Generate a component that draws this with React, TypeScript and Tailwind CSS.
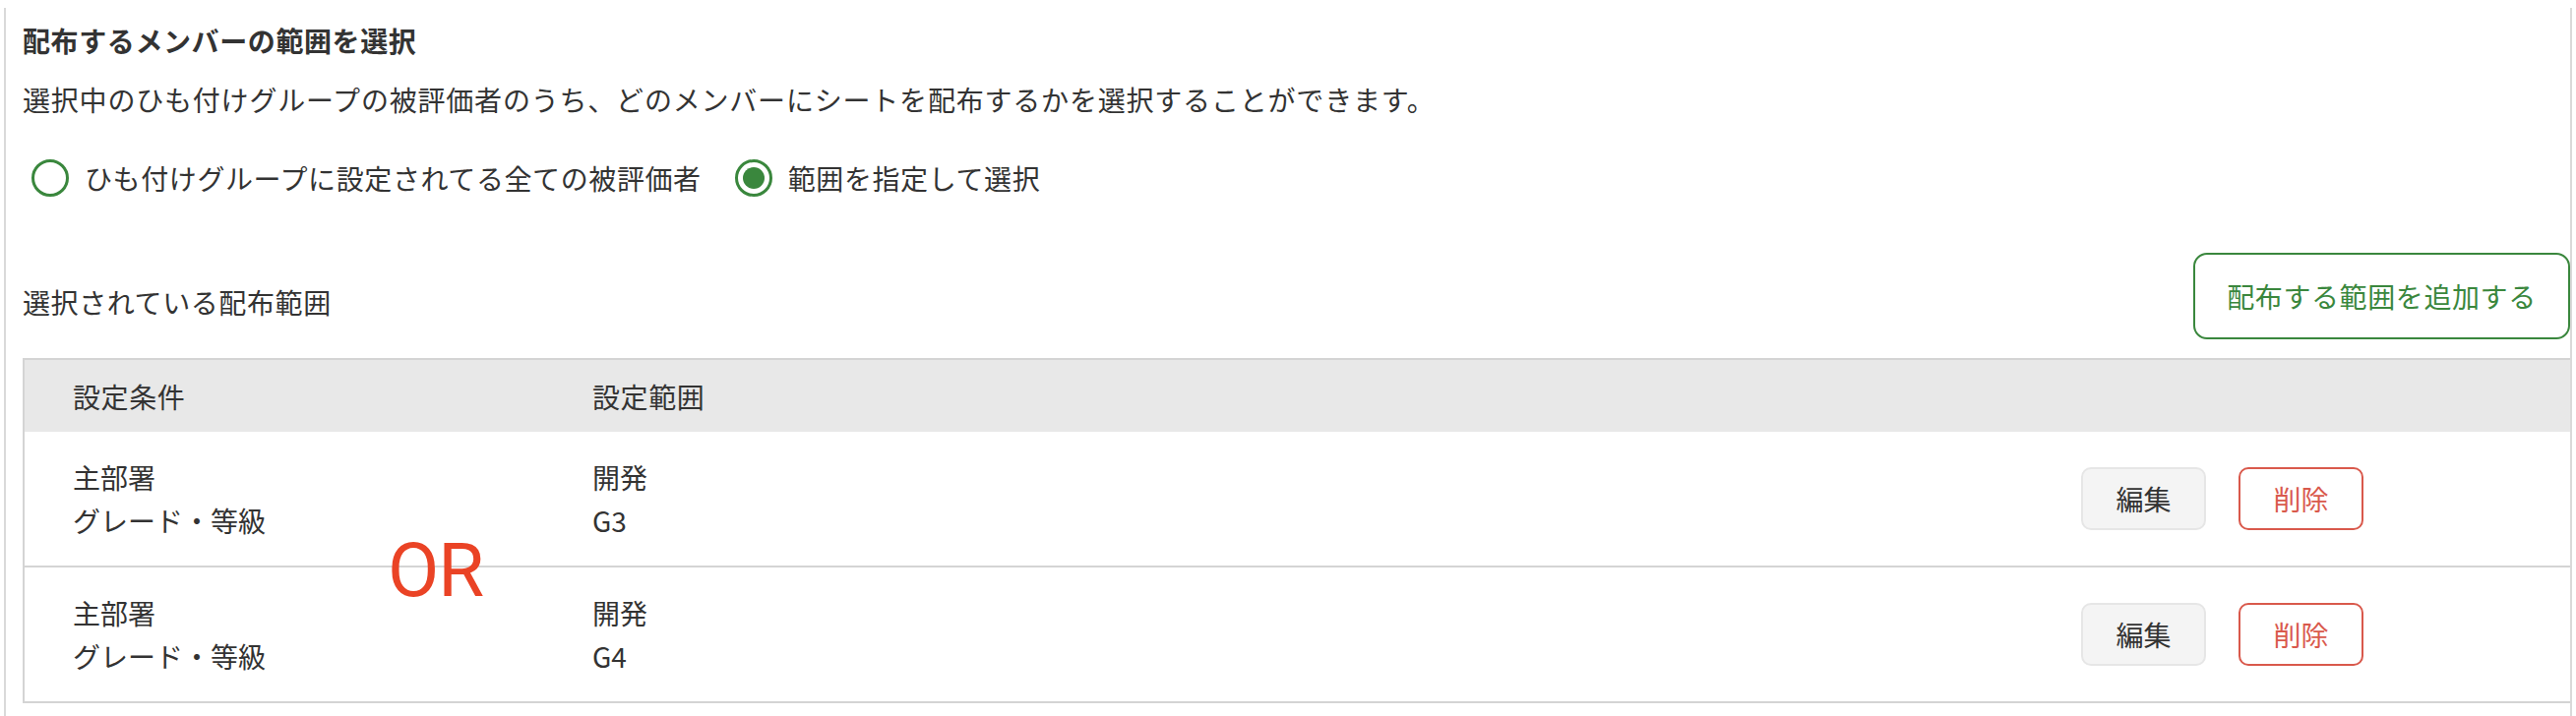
import React from 'react';

const rows = [
  { conditions: ['主部署', 'グレード・等級'], values: ['開発', 'G3'] },
  { conditions: ['主部署', 'グレード・等級'], values: ['開発', 'G4'] },
];

const Radio = ({ checked, label }: { checked?: boolean; label: string }) => (
  <label className="flex items-center gap-[16px]">
    <span className="flex h-[38px] w-[38px] items-center justify-center rounded-full border-[3px] border-[#3a873d] bg-white">
      {checked && <span className="h-[22px] w-[22px] rounded-full bg-[#3a873d]" />}
    </span>
    <span>{label}</span>
  </label>
);

export default function App() {
  return (
    <div className="min-h-screen bg-white font-['Noto_Sans_CJK_JP',sans-serif] text-[28px] leading-[42px] tracking-[0.6px] text-[#333]">
      <div className="ml-[4px] mt-[8px] w-[2610px] border-x-2 border-[#d9d9d9] pb-[14px] pl-[17px] pt-[12px]">
        {/* heading */}
        <h2 className="font-bold">配布するメンバーの範囲を選択</h2>
        <p className="mt-[18px] tracking-[0.8px]">
          選択中のひも付けグループの被評価者のうち、どのメンバーにシートを配布するかを選択することができます。
        </p>

        <div className="ml-[9px] mt-[38px] flex items-center gap-[34px]">
          <Radio label="ひも付けグループに設定されてる全ての被評価者" />
          <Radio checked label="範囲を指定して選択" />
        </div>

        {/* selected ranges */}
        <div className="mt-[55px] flex items-center justify-between">
          <span className="mt-[12px]">選択されている配布範囲</span>
          <button className="h-[88px] w-[383px] rounded-[14px] border-2 border-[#3a873d] bg-white tracking-[0.6px] text-[#3a873d]">
            配布する範囲を追加する
          </button>
        </div>

        <div className="relative mt-[19px] border-y-2 border-l-2 border-[#d4d4d4]">
          <div className="grid h-[73px] grid-cols-[527px_1fr] items-center bg-[#e8e8e8]">
            <div className="pl-[49px]">設定条件</div>
            <div className="pl-[50px]">設定範囲</div>
          </div>
          {rows.map((row, i) => (
            <div
              key={i}
              className={`grid grid-cols-[527px_1fr_auto] items-center py-[24px] leading-[44px] tracking-normal ${
                i < rows.length - 1 ? 'border-b-2 border-[#d4d4d4]' : ''
              }`}
            >
              <div className="pl-[49px]">
                {row.conditions.map((c) => (
                  <div key={c}>{c}</div>
                ))}
              </div>
              <div className="pl-[50px]">
                {row.values.map((v) => (
                  <div key={v}>{v}</div>
                ))}
              </div>
              <div className="flex gap-[33px] pr-[210px]">
                <button className="h-[64px] w-[127px] rounded-[10px] border-2 border-[#e6e6e6] bg-[#f4f4f4] text-[#333]">
                  編集
                </button>
                <button className="h-[64px] w-[127px] rounded-[10px] border-2 border-[#d9594c] bg-white text-[#d9594c]">
                  削除
                </button>
              </div>
            </div>
          ))}

          {/* annotation */}
          <span className="absolute left-[369px] top-[176px] font-['Roboto',sans-serif] text-[76px] leading-none tracking-[-1px] text-[#ea4325]">
            OR
          </span>
        </div>
      </div>
    </div>
  );
}
